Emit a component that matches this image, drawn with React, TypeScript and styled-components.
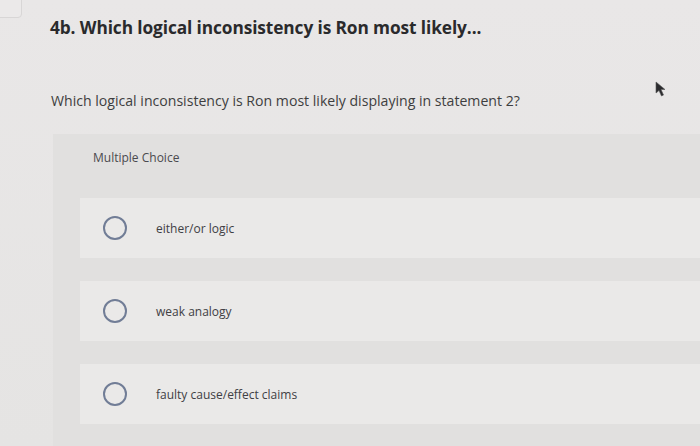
import React from "react";
import styled, { createGlobalStyle } from "styled-components";

const Global = createGlobalStyle`
  html, body { margin: 0; padding: 0; }
  body {
    width: 700px;
    height: 446px;
    overflow: hidden;
    background: #e8e6e6;
    font-family: "Open Sans", "Liberation Sans", sans-serif;
  }
`;

const Page = styled.div`
  position: relative;
  width: 700px;
  height: 446px;
  overflow: hidden;
  background: linear-gradient(180deg, #e9e7e7 0%, #e5e4e3 100%);
`;

const CornerTab = styled.div`
  position: absolute;
  left: -4px;
  top: -4px;
  width: 24px;
  height: 20px;
  border: 1px solid #d8d6d6;
  border-radius: 0 0 4px 0;
  background: #ebe9e9;
`;

const Content = styled.div`
  padding: 15px 0 0 50px;
  display: flex;
  flex-direction: column;
`;

const Title = styled.h1`
  margin: 0;
  font-size: 17.3px;
  line-height: 26px;
  font-weight: 700;
  color: #2a2a2c;
  letter-spacing: -0.1px;
`;

const Question = styled.p`
  margin: 50px 0 0 1px;
  font-size: 14.1px;
  line-height: 20px;
  color: #3e3e40;
`;

const Panel = styled.section`
  margin: 23px 0 0 3px;
  background: #e1e0df;
  display: flex;
  flex-direction: column;
  height: 320px;
`;

const PanelHeader = styled.div`
  height: 46px;
  display: flex;
  align-items: center;
  padding-left: 40px;
  font-size: 12px;
  color: #4a4a4e;
`;

const Options = styled.div`
  margin-top: 18px;
  padding-left: 27px;
  display: flex;
  flex-direction: column;
  gap: 23px;
`;

const Row = styled.div`
  height: 60px;
  background: #eae9e8;
  display: flex;
  align-items: center;
  padding-left: 23px;
`;

const Radio = styled.span`
  width: 20px;
  height: 20px;
  border-radius: 50%;
  border: 2px solid #717d96;
  flex: none;
`;

const Label = styled.span`
  margin-left: 29px;
  font-size: 12px;
  color: #404044;
`;

const Cursor = styled.svg`
  position: absolute;
  left: 655px;
  top: 81px;
`;

const options = ["either/or logic", "weak analogy", "faulty cause/effect claims"];

export default function App() {
  return (
    <Page>
      <Global />
      <CornerTab />
      <Content>
        <Title>4b. Which logical inconsistency is Ron most likely...</Title>
        <Question>Which logical inconsistency is Ron most likely displaying in statement 2?</Question>
        <Panel>
          <PanelHeader>Multiple Choice</PanelHeader>
          <Options>
            {options.map((o) => (
              <Row key={o}>
                <Radio />
                <Label>{o}</Label>
              </Row>
            ))}
          </Options>
        </Panel>
      </Content>
      <Cursor width="14" height="16" viewBox="0 0 14 16">
        <path d="M1 1 L1 12 L4 9.5 L6.5 15 L8.5 14 L6 8.5 L10 8.5 Z" fill="#2b2b2e" stroke="#555" strokeWidth="0.6" />
      </Cursor>
    </Page>
  );
}
